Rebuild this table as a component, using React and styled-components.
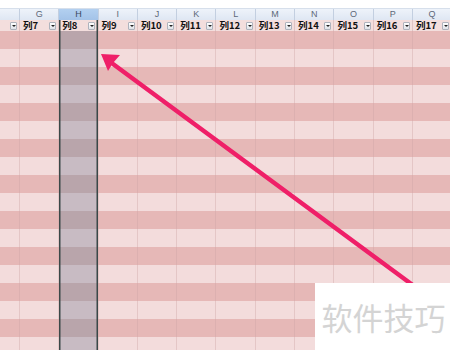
import React from 'react';
import styled, { createGlobalStyle, css } from 'styled-components';

const GlobalStyle = createGlobalStyle`
  html, body {
    margin: 0;
    padding: 0;
    background: #ffffff;
    overflow: hidden;
  }
  body {
    font-family: "Liberation Sans", "Noto Sans CJK SC", sans-serif;
  }
`;

const COLS = ['G', 'H', 'I', 'J', 'K', 'L', 'M', 'N', 'O', 'P', 'Q'];
const SELECTED = 'H';
const ROW_COUNT = 18;

const Sheet = styled.div`
  position: relative;
  width: 450px;
  height: 350px;
  overflow: hidden;
  background: #ffffff;
`;

const TopStrip = styled.div`
  height: 9px;
  background: #ffffff;
  border-bottom: 1px solid #d6dfeb;
  box-sizing: border-box;
`;

const Grid = styled.div`
  display: grid;
  grid-template-columns: 20px repeat(11, 39.3px);
`;

const selectedEdges = css`
  box-shadow: inset 1.5px 0 0 #3a4848, inset -1.5px 0 0 #3a4848;
`;

const ColLetter = styled.div`
  height: 11px;
  line-height: 11px;
  font-size: 9px;
  text-align: center;
  color: ${p => (p.$selected ? '#3a4860' : '#5d6878')};
  background: ${p => (p.$selected
    ? 'linear-gradient(#b3d0f0, #a3c3e8)'
    : 'linear-gradient(#eef3fa, #dfe7f3)')};
  border-right: 1px solid #c3cfe0;
  box-sizing: border-box;
`;

const HeadCell = styled.div`
  height: 11px;
  display: flex;
  align-items: center;
  justify-content: space-between;
  padding: 0 2px 0 3px;
  background: #f3dedd;
  border-right: 1px solid #dfc3c3;
  box-sizing: border-box;
  ${p => p.$selected && selectedEdges}
  ${p => p.$selected && css`padding-left: 3px; padding-right: 3px;`}
`;

const HeadLabel = styled.span`
  font-family: "Noto Sans CJK SC", "Liberation Sans", sans-serif;
  font-weight: 700;
  font-size: 9.5px;
  line-height: 11px;
  color: #111111;
  white-space: nowrap;
`;

const Drop = styled.span`
  position: relative;
  width: 7px;
  height: 8px;
  margin-left: auto;
  border: 1px solid #aeb3bd;
  border-radius: 1px;
  background: linear-gradient(#ffffff, #dfe2e8);
  box-sizing: border-box;
  flex: none;

  &::after {
    content: '';
    position: absolute;
    left: 1px;
    top: 2.5px;
    border-left: 2px solid transparent;
    border-right: 2px solid transparent;
    border-top: 2px solid #222;
  }
`;

const BodyCell = styled.div`
  height: 18px;
  background: ${p => {
    if (p.$selected) return p.$dark ? '#b9a5ab' : '#c8bbc3';
    return p.$dark ? '#e6b8b7' : '#f3dcdc';
  }};
  border-right: 1px solid ${p => (p.$dark ? '#dcb0b0' : '#e4c6c6')};
  box-sizing: border-box;
  ${p => p.$selected && selectedEdges}
`;

const ArrowLayer = styled.svg`
  position: absolute;
  left: 0;
  top: 0;
  width: 450px;
  height: 350px;
  pointer-events: none;
`;

const Watermark = styled.div`
  position: absolute;
  right: 0;
  bottom: 0;
  width: 135px;
  height: 67px;
  background: #ffffff;
  display: flex;
  align-items: center;
  justify-content: center;
  padding-left: 2px;
  box-sizing: border-box;
  font-family: "Noto Sans CJK SC", sans-serif;
  font-size: 31px;
  color: #d4d4d4;
`;

const Arrow = () => (
  <ArrowLayer viewBox="0 0 450 350">
    <line x1="414" y1="286" x2="113" y2="64" stroke="#ef1f68" strokeWidth="4.5" strokeLinecap="round" />
    <polygon points="101,54 120,55 113,63 108,71" fill="#ef1f68" />
  </ArrowLayer>
);

export default function App() {
  return (
    <>
      <GlobalStyle />
      <Sheet>
        <TopStrip />
        <Grid>
          <ColLetter />
          {COLS.map(c => (
            <ColLetter key={c} $selected={c === SELECTED}>{c}</ColLetter>
          ))}

          <HeadCell><Drop /></HeadCell>
          {COLS.map((c, i) => (
            <HeadCell key={c} $selected={c === SELECTED}>
              <HeadLabel>列{i + 7}</HeadLabel>
              <Drop />
            </HeadCell>
          ))}

          {Array.from({ length: ROW_COUNT }).map((_, r) => (
            <React.Fragment key={r}>
              <BodyCell $dark={r % 2 === 0} />
              {COLS.map(c => (
                <BodyCell key={c} $dark={r % 2 === 0} $selected={c === SELECTED} />
              ))}
            </React.Fragment>
          ))}
        </Grid>
        <Arrow />
        <Watermark>软件技巧</Watermark>
      </Sheet>
    </>
  );
}
